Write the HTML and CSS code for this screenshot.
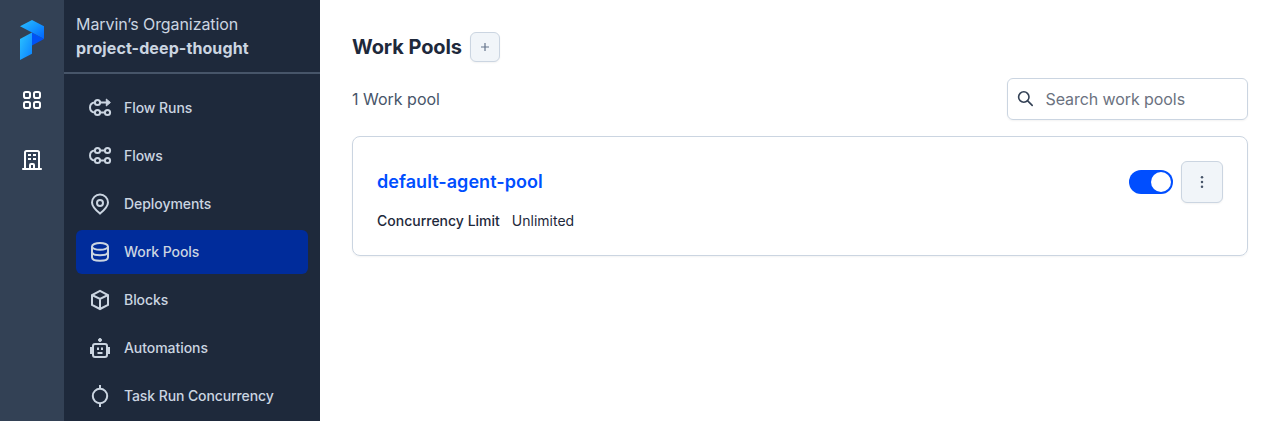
FILE: index.html
```html
<!DOCTYPE html>
<html lang="en">
<head>
<meta charset="utf-8">
<title>Work Pools</title>
<link rel="stylesheet" href="styles.css">
</head>
<body>
<div class="app">
  <nav class="rail">
    <svg class="logo" viewBox="0 0 24 40">
      <defs>
        <linearGradient id="top" x1="0" y1="0" x2="1" y2="1"><stop offset="0" stop-color="#2bc0ff"/><stop offset=".5" stop-color="#1496ff"/><stop offset="1" stop-color="#0062ff"/></linearGradient>
        <linearGradient id="stem" x1="0" y1="0" x2="1" y2="1"><stop offset="0" stop-color="#2cc4ff"/><stop offset="1" stop-color="#0a80ff"/></linearGradient>
      </defs>
      <path d="M12 12.6 24 19 12 25.5Z" fill="#0052f5"/>
      <path d="M0 6.3 12 0 24 6.3V19L12 12.6Z" fill="url(#top)"/>
      <path d="M0 19 12 12.6V33.8L0 40Z" fill="url(#stem)"/>
    </svg>
    <svg class="icon rail-icon" viewBox="0 0 24 24"><rect x="4" y="4" width="6" height="6" rx="1.8"/><rect x="14" y="4" width="6" height="6" rx="1.8"/><rect x="4" y="14" width="6" height="6" rx="1.8"/><rect x="14" y="14" width="6" height="6" rx="1.8"/></svg>
    <svg class="icon rail-icon" viewBox="0 0 24 24"><path d="M2.2 21H21.8M5 21V4.5Q5 3 6.5 3H17.5Q19 3 19 4.5V21M10 21V17Q10 16 11 16H13Q14 16 14 17V21"/><path d="M8 7.1H11M13 7.1H16M8 11.1H11M13 11.1H16"/></svg>
  </nav>
  <aside class="sidebar">
    <header class="workspace">
      <div class="organization">Marvin’s Organization</div>
      <div class="workspace-name">project-deep-thought</div>
    </header>
    <div class="menu">
      <a class="item"><svg class="icon" viewBox="0 0 24 24"><circle cx="9.5" cy="6.5" r="2.6"/><circle cx="9.5" cy="16.5" r="2.6"/><circle cx="19.5" cy="16.5" r="2.6"/><path d="M12.1 6.5H19M12.1 16.5H16.9M6.9 6.5C.4 7 .4 16 6.9 16.5"/><path class="solid" d="M18.3 3 22.4 6.5 18.3 10Z"/></svg>Flow Runs</a>
      <a class="item"><svg class="icon" viewBox="0 0 24 24"><circle cx="9.5" cy="6.5" r="2.6"/><circle cx="19.5" cy="6.5" r="2.6"/><circle cx="9.5" cy="16.5" r="2.6"/><circle cx="19.5" cy="16.5" r="2.6"/><path d="M12.1 6.5H16.9M12.1 16.5H16.9M6.9 6.5C.4 7 .4 16 6.9 16.5"/></svg>Flows</a>
      <a class="item"><svg class="icon" viewBox="0 0 24 24"><path d="M12 21.6C8 18.3 4 14.7 4 10.5A8 8 0 0 1 20 10.5C20 14.7 16 18.3 12 21.6Z"/><circle cx="12" cy="11" r="3"/></svg>Deployments</a>
      <a class="item active"><svg class="icon" viewBox="0 0 24 24"><ellipse cx="12" cy="6.4" rx="8" ry="3.4"/><path d="M4 6.4V17.3C4 22 20 22 20 17.3V6.4M4 11.7C4 16.4 20 16.4 20 11.7"/></svg>Work Pools</a>
      <a class="item"><svg class="icon" viewBox="0 0 24 24"><path d="M12 2.9 20 7V16.8L12 21 4 16.8V7ZM4 7 12 11 20 7M12 11V21"/></svg>Blocks</a>
      <a class="item"><svg class="icon" viewBox="0 0 24 24"><rect x="5" y="8" width="14" height="13" rx="2"/><path d="M3 11V18M21 11V18M10 11.5V14M14 11.5V14M9.5 17H14.5"/><circle class="solid" cx="12" cy="4" r="1.5"/></svg>Automations</a>
      <a class="item"><svg class="icon" viewBox="0 0 24 24"><circle cx="12" cy="12" r="7.2"/><path d="M12 1V4.8M12 19.2V23"/></svg><span class="long">Task Run Concurrency</span></a>
    </div>
  </aside>
  <main class="main">
    <div class="heading"><h1>Work Pools</h1><button class="button add" aria-label="Add"><svg viewBox="0 0 10 10"><path d="M5 1V9M1 5H9"/></svg></button></div>
    <div class="toolbar"><span>1 Work pool</span>
      <label class="search"><svg viewBox="0 0 18 18"><circle cx="6.8" cy="7" r="5.2"/><path d="M10.7 10.9 15.2 15.4"/></svg><input placeholder="Search work pools"></label>
    </div>
    <section class="card">
      <div class="card-head"><a class="pool">default-agent-pool</a>
        <div class="actions"><span class="toggle"><span class="knob"></span></span><button class="button more" aria-label="More"><svg viewBox="0 0 4 14"><circle cx="2" cy="2.3" r="1.25"/><circle cx="2" cy="7" r="1.25"/><circle cx="2" cy="11.7" r="1.25"/></svg></button></div>
      </div>
      <div class="detail"><span class="label">Concurrency Limit</span><span>Unlimited</span></div>
    </section>
  </main>
</div>
</body>
</html>
```
FILE: styles.css
```css
* { box-sizing: border-box; }
body { margin: 0; background: #fff; font: 16px/24px Inter, "Liberation Sans", sans-serif; color: #1e293b; overflow: hidden; }
.app { display: flex; height: 421px; }
.rail { width: 64px; flex: none; background: #334155; display: flex; flex-direction: column; align-items: center; padding-top: 20px; }
.logo { width: 24px; height: 40px; margin-bottom: 28px; }
.icon { width: 24px; height: 24px; flex: none; fill: none; stroke: currentColor; stroke-width: 2; }
.icon .solid { fill: currentColor; stroke-width: 1; }
.rail-icon { color: #fff; margin-bottom: 36px; }
.sidebar { width: 256px; flex: none; background: #1e293b; color: #cbd5e1; overflow: hidden; }
.workspace { height: 74px; padding: 12px 12px 0; border-bottom: 2px solid #475569; }
.organization { letter-spacing: -.07px; }
.workspace-name { font-weight: 700; letter-spacing: .1px; }
.menu { display: flex; flex-direction: column; gap: 4px; padding: 12px; }
.item { display: flex; align-items: center; gap: 12px; height: 44px; flex: none; padding: 0 12px; border-radius: 6px; font-size: 14px; font-weight: 550; letter-spacing: -.06px; }
.long { letter-spacing: -.1px; }
.active { background: #002c9b; }
.main { flex: 1; padding: 32px; }
.heading { display: flex; align-items: center; gap: 8px; height: 30px; }
h1 { margin: 0; font-size: 20px; line-height: 28px; font-weight: 700; letter-spacing: -.08px; }
.button { display: flex; align-items: center; justify-content: center; padding: 0; background: #f1f5f9; border: 1px solid #cbd5e1; border-radius: 6px; box-shadow: 0 1px 2px rgba(0, 0, 0, .05); }
.add { width: 30px; height: 30px; }
.add svg { width: 10px; height: 10px; stroke: #64748b; stroke-width: 1.2; }
.toolbar { display: flex; align-items: center; justify-content: space-between; height: 42px; margin: 16px 0; color: #475569; }
.search { display: flex; align-items: center; width: 241px; height: 42px; padding: 0 9px; gap: 10.5px; border: 1px solid #cbd5e1; border-radius: 6px; box-shadow: 0 1px 2px rgba(0, 0, 0, .05); }
.search svg { width: 18px; height: 18px; flex: none; fill: none; stroke: #334155; stroke-width: 1.6; stroke-linecap: round; }
.search input { width: 100%; min-width: 0; padding: 0; border: 0; outline: 0; background: none; font: inherit; letter-spacing: -.08px; }
.search input::placeholder { color: #6b7280; opacity: 1; }
.card { height: 120px; padding: 24px; border: 1px solid #cbd5e1; border-radius: 8px; box-shadow: 0 1px 2px rgba(0, 0, 0, .05); }
.card-head, .actions { display: flex; align-items: center; }
.card-head { justify-content: space-between; height: 42px; }
.actions { gap: 8px; }
.pool { font-size: 18px; font-weight: 600; letter-spacing: .05px; color: #004eff; }
.toggle { display: flex; justify-content: flex-end; width: 44px; height: 24px; padding: 2px; border-radius: 12px; background: #004eff; }
.knob { width: 20px; height: 20px; border-radius: 50%; background: #fff; }
.more { width: 42px; height: 42px; }
.more svg { width: 4px; height: 14px; fill: #475569; }
.detail { display: flex; gap: 12px; margin-top: 8px; font-size: 14px; line-height: 20px; }
.label { font-weight: 500; }
```
